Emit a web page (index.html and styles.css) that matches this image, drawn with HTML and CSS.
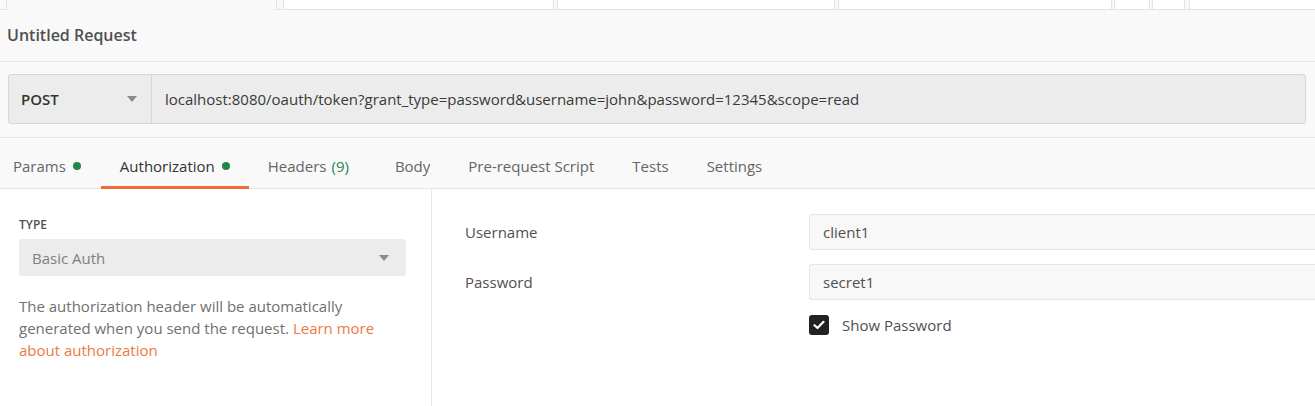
FILE: index.html
```html
<!DOCTYPE html>
<html>
<head>
    <title>Untitled Request</title>
    <link rel="stylesheet" href="styles.css">
</head>
<body>
    <div class="tab-strip">
        <div class="strip-gap" style="width: 6px"></div>
        <div class="strip-tab active" style="width: 269px"></div>
        <div class="strip-gap" style="width: 6px"></div>
        <div class="strip-tab" style="width: 269px"></div>
        <div class="strip-gap" style="width: 3px"></div>
        <div class="strip-tab" style="width: 276px"></div>
        <div class="strip-gap" style="width: 3px"></div>
        <div class="strip-tab" style="width: 272px"></div>
        <div class="strip-gap" style="width: 2px"></div>
        <div class="strip-tab" style="width: 34px"></div>
        <div class="strip-gap" style="width: 2px"></div>
        <div class="strip-tab" style="width: 31px"></div>
        <div class="strip-gap" style="width: 4px"></div>
        <div class="strip-tab rest"></div>
    </div>

    <div class="request-title">Untitled Request</div>

    <div class="url-row">
        <div class="url-bar">
            <div class="method">
                <span>POST</span>
                <span class="caret"></span>
            </div>
            <div class="url">localhost:8080/oauth/token?grant_type=password&amp;username=john&amp;password=12345&amp;scope=read</div>
        </div>
    </div>

    <div class="req-tabs">
        <div class="req-tab first">Params <span class="dot"></span></div>
        <div class="req-tab active">Authorization <span class="dot"></span></div>
        <div class="req-tab">Headers <span class="count">(9)</span></div>
        <div class="req-tab body-tab">Body</div>
        <div class="req-tab">Pre-request Script</div>
        <div class="req-tab">Tests</div>
        <div class="req-tab">Settings</div>
    </div>

    <div class="auth-pane">
        <div class="auth-side">
            <div class="type-label">TYPE</div>
            <div class="type-select">
                <span>Basic Auth</span>
                <span class="caret"></span>
            </div>
            <p class="auth-help">
                The authorization header will be automatically generated when you send the request.
                <a href="#">Learn more about authorization</a>
            </p>
        </div>
        <div class="auth-fields">
            <div class="field-label">Username</div>
            <div class="field-input">client1</div>
            <div class="field-label">Password</div>
            <div class="field-input">secret1</div>
            <div></div>
            <label class="show-pass">
                <span class="checkbox">
                    <svg width="12" height="10" viewBox="0 0 12 10"><path d="M1.5 5.2 L4.5 8 L10.5 1.8" fill="none" stroke="#fff" stroke-width="2.2" stroke-linecap="round" stroke-linejoin="round"/></svg>
                </span>
                Show Password
            </label>
        </div>
    </div>
</body>
</html>
```

FILE: styles.css
```css
body {
    margin: 0;
    padding: 0;
    font-family: "Open Sans", "Liberation Sans", sans-serif;
    font-size: 15px;
    color: #505050;
    background-color: #f9f9f9;
    height: 406px;
    display: flex;
    flex-direction: column;
    overflow: hidden;
}
.tab-strip {
    display: flex;
    height: 10px;
    flex-shrink: 0;
}
.strip-gap {
    border-bottom: 1px solid #e3e3e3;
    flex-shrink: 0;
}
.strip-tab {
    background-color: #ffffff;
    border: 1px solid #e3e3e3;
    border-top: none;
    flex-shrink: 0;
}
.strip-tab.active {
    background-color: #f9f9f9;
    border-bottom: none;
}
.strip-tab.rest {
    flex: 1;
    border-right: none;
}
.request-title {
    height: 51px;
    line-height: 50px;
    padding-left: 7px;
    font-size: 16px;
    font-weight: 600;
    color: #505050;
    border-bottom: 1px solid #e6e6e6;
    flex-shrink: 0;
}
.url-row {
    padding: 12px 9px 13px 8px;
    border-bottom: 1px solid #e6e6e6;
    flex-shrink: 0;
}
.url-bar {
    display: flex;
    height: 48px;
    background-color: #ececec;
    border: 1px solid #d6d6d6;
    border-radius: 3px;
}
.method {
    width: 143px;
    box-sizing: border-box;
    display: flex;
    align-items: center;
    justify-content: space-between;
    padding: 0 14px 0 12px;
    border-right: 1px solid #d6d6d6;
    font-weight: 600;
    color: #333333;
}
.caret {
    width: 0;
    height: 0;
    border-left: 5px solid transparent;
    border-right: 5px solid transparent;
    border-top: 6px solid #8a8a8a;
}
.url {
    display: flex;
    align-items: center;
    padding-left: 13px;
    color: #3a3a3a;
}
.req-tabs {
    display: flex;
    height: 50px;
    border-bottom: 1px solid #e6e6e6;
    flex-shrink: 0;
}
.req-tab {
    display: flex;
    align-items: center;
    padding: 7px 19px 0;
    color: #666666;
    border-bottom: 3px solid transparent;
    margin-bottom: -1px;
}
.req-tab.first {
    padding-left: 13px;
    padding-right: 20px;
}
.req-tab.body-tab {
    margin-left: 8px;
}
.req-tab.active {
    color: #333333;
    border-bottom-color: #f26b3a;
}
.dot {
    display: inline-block;
    width: 8px;
    height: 8px;
    border-radius: 50%;
    background-color: #26854a;
    margin-left: 7px;
}
.count {
    color: #26854a;
    margin-left: 5px;
}
.auth-pane {
    flex: 1;
    display: flex;
    background-color: #ffffff;
}
.auth-side {
    width: 432px;
    box-sizing: border-box;
    padding: 27px 25px 0 19px;
    border-right: 1px solid #e6e6e6;
    flex-shrink: 0;
}
.type-label {
    font-size: 12px;
    font-weight: 600;
    color: #505050;
    margin-bottom: 6px;
}
.type-select {
    height: 37px;
    background-color: #ececec;
    border-radius: 3px;
    display: flex;
    align-items: center;
    justify-content: space-between;
    padding: 0 17px 0 13px;
    color: #808080;
}
.auth-help {
    margin: 19px 0 0;
    line-height: 22px;
    color: #707070;
}
.auth-help a {
    color: #ec7a44;
    text-decoration: none;
}
.auth-fields {
    flex: 1;
    display: grid;
    grid-template-columns: 344px 1fr;
    grid-auto-rows: min-content;
    row-gap: 14px;
    padding: 25px 0 0 33px;
    align-content: start;
}
.field-label {
    display: flex;
    align-items: center;
    color: #505050;
}
.field-input {
    height: 36px;
    box-sizing: border-box;
    display: flex;
    align-items: center;
    padding-left: 13px;
    background-color: #f8f8f8;
    border: 1px solid #e6e6e6;
    border-right: none;
    border-radius: 3px 0 0 3px;
    color: #505050;
}
.show-pass {
    display: flex;
    align-items: center;
    margin-top: 1px;
    color: #505050;
}
.checkbox {
    width: 20px;
    height: 20px;
    border-radius: 3px;
    background-color: #222222;
    display: flex;
    align-items: center;
    justify-content: center;
    margin-right: 13px;
}
```
